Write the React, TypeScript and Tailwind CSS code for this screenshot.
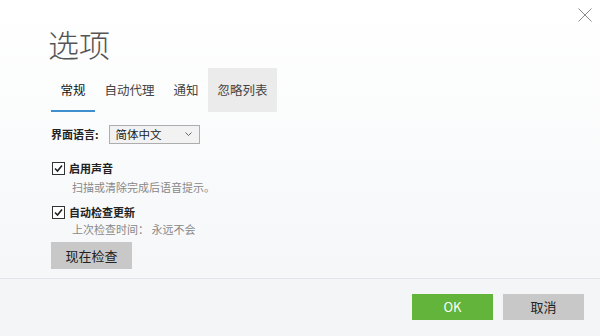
import React from "react";

const font = { fontFamily: '"Noto Sans CJK SC", "Noto Sans", sans-serif' };

function Check() {
  return (
    <span className="flex h-[13px] w-[13px] items-center justify-center border border-[#333] bg-white">
      <svg width="11" height="11" viewBox="0 0 11 11">
        <path d="M2 5.5 L4.5 8 L9 2.5" fill="none" stroke="#222" strokeWidth="1.6" />
      </svg>
    </span>
  );
}

export default function App() {
  return (
    <div
      className="relative flex h-[336px] w-[600px] flex-col overflow-hidden bg-gradient-to-b from-[#ffffff] to-[#f3f5f7] text-[#222]"
      style={font}
    >
      <button className="absolute right-[8px] top-[8px] h-[14px] w-[14px]">
        <svg width="14" height="14" viewBox="0 0 14 14">
          <path d="M0.5 0.5 L13.5 13.5 M13.5 0.5 L0.5 13.5" stroke="#8a8a8a" strokeWidth="1" />
        </svg>
      </button>

      <div className="pl-[48px] pt-[28px] text-[31px] font-light leading-none text-[#555]">选项</div>

      <div className="mt-[9px] flex h-[44px] pl-[51px] text-[12.5px]">
        <div className="relative flex items-center px-[9.5px] text-[#111]">
          常规
          <span className="absolute bottom-0 left-0 right-0 h-[2px] bg-[#3d8fce]" />
        </div>
        <div className="flex items-center px-[9.5px] text-[#444]">自动代理</div>
        <div className="flex items-center px-[9.5px] text-[#444]">通知</div>
        <div className="flex items-center bg-[#ebebeb] px-[9.5px] text-[#444]">忽略列表</div>
      </div>

      <div className="flex flex-col pl-[51px] text-[11px]">
        <div className="mt-[13px] flex items-center gap-[10px]">
          <span className="font-bold">界面语言:</span>
          <div className="flex h-[19px] w-[91px] items-center justify-between border border-[#adadad] bg-[#f2f2f2] pl-[6px] pr-[7px] text-[11.5px]">
            <span>简体中文</span>
            <svg width="7" height="5" viewBox="0 0 7 5">
              <path d="M0.5 0.5 L3.5 3.5 L6.5 0.5" fill="none" stroke="#666" strokeWidth="1" />
            </svg>
          </div>
        </div>

        <div className="mt-[16px] flex items-center gap-[4px] pl-[1px]">
          <Check />
          <span className="font-bold">启用声音</span>
        </div>
        <div className="mt-[2px] pl-[21px] text-[#888]">扫描或清除完成后语音提示。</div>

        <div className="mt-[9px] flex items-center gap-[4px] pl-[1px]">
          <Check />
          <span className="font-bold">自动检查更新</span>
        </div>
        <div className="mt-0 pl-[21px] text-[#888]">上次检查时间： 永远不会</div>

        <button className="mt-[5px] flex h-[27px] w-[81px] items-center justify-center bg-[#c8c8c8] text-[13px] text-[#222]">
          现在检查
        </button>
      </div>

      <div className="mt-auto flex h-[58px] items-start justify-end gap-[10px] border-t border-[#dfe5eb] bg-[#f3f5f7] pr-[16px] pt-[15px] text-[13px]">
        <button className="flex h-[26px] w-[81px] items-center justify-center bg-[#62b43b] text-white">OK</button>
        <button className="flex h-[26px] w-[81px] items-center justify-center bg-[#c8c8c8] text-[#222]">取消</button>
      </div>
    </div>
  );
}
